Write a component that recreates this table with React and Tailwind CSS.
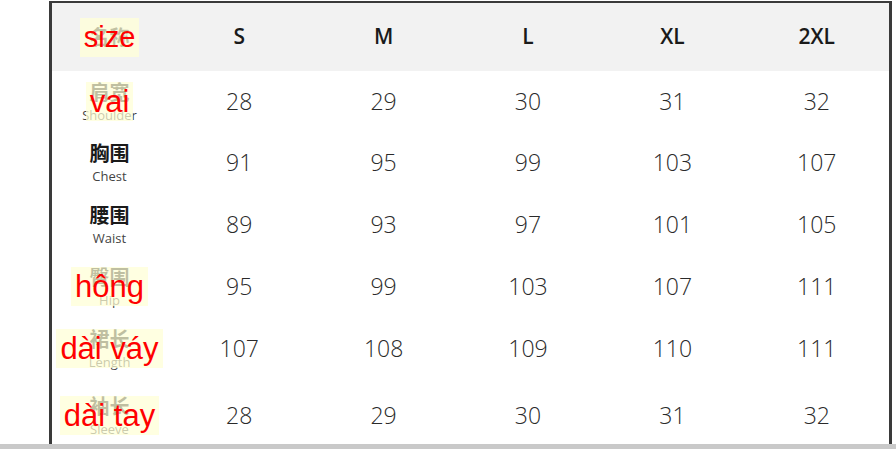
import React from 'react';

const sizes = ['S', 'M', 'L', 'XL', '2XL'];

const rows = [
  { cn: '肩宽', en: 'Shoulder', vi: 'vai', values: [28, 29, 30, 31, 32], h: 'h-[61px]' },
  { cn: '胸围', en: 'Chest', values: [91, 95, 99, 103, 107], h: 'h-[61px]' },
  { cn: '腰围', en: 'Waist', values: [89, 93, 97, 101, 105], h: 'h-[62px]' },
  { cn: '臀围', en: 'Hip', vi: 'hông', values: [95, 99, 103, 107, 111], h: 'h-[62px]' },
  { cn: '裙长', en: 'Length', vi: 'dài váy', values: [107, 108, 109, 110, 111], h: 'h-[62px]' },
  { cn: '袖长', en: 'Sleeve', vi: 'dài tay', values: [28, 29, 30, 31, 32], h: 'h-[65px] pt-[8px]' },
];

function Overlay({ text, size = 'text-[31px]' }) {
  return (
    <div className="absolute inset-0 flex items-center justify-center pointer-events-none">
      <span
        className={`px-[4px] ${size} leading-[39px] text-[#ff0000] bg-[rgba(255,255,214,0.72)]`}
        style={{ fontFamily: '"Liberation Sans", Arial, sans-serif' }}
      >
        {text}
      </span>
    </div>
  );
}

export default function App() {
  return (
    <div
      className="w-[896px] h-[449px] bg-white flex flex-col overflow-hidden"
      style={{ fontFamily: '"Open Sans", "Noto Sans CJK SC", sans-serif' }}
    >
      <div className="flex-1 pt-px pl-[49px] pr-[4px]">
        <div className="h-full border-l-[3px] border-r-[3px] border-t-2 border-[#3a3a3a]">
          {/* Header */}
          <div className="grid grid-cols-[115px_repeat(5,1fr)] h-[68px] bg-[#f2f2f2]">
            <div className="relative flex items-center justify-center">
              <span className="text-[20px] font-bold text-[#222]" style={{ fontFamily: '"Noto Sans CJK SC", sans-serif' }}>名称</span>
              <Overlay text="size" size="text-[29px]" />
            </div>
            {sizes.map((s) => (
              <div key={s} className="flex items-center justify-center text-[21px] font-semibold text-[#1a1a1a]">
                {s}
              </div>
            ))}
          </div>

          {/* Body */}
          {rows.map((r) => (
            <div key={r.en} className={`grid grid-cols-[115px_repeat(5,1fr)] ${r.h}`}>
              <div className="relative flex flex-col items-center justify-center">
                <span
                  className="text-[20px] leading-[24px] font-bold text-[#1a1a1a]"
                  style={{ fontFamily: '"Noto Sans CJK SC", sans-serif' }}
                >
                  {r.cn}
                </span>
                <span className="text-[13px] leading-[16px] text-[#444] mt-[3px]">{r.en}</span>
                {r.vi && <Overlay text={r.vi} />}
              </div>
              {r.values.map((v, i) => (
                <div key={i} className="flex items-center justify-center text-[23px] font-light text-[#2a2a2a]">
                  {v}
                </div>
              ))}
            </div>
          ))}
        </div>
      </div>
      <div className="h-[6px] bg-[#c9c9c9]" />
    </div>
  );
}
